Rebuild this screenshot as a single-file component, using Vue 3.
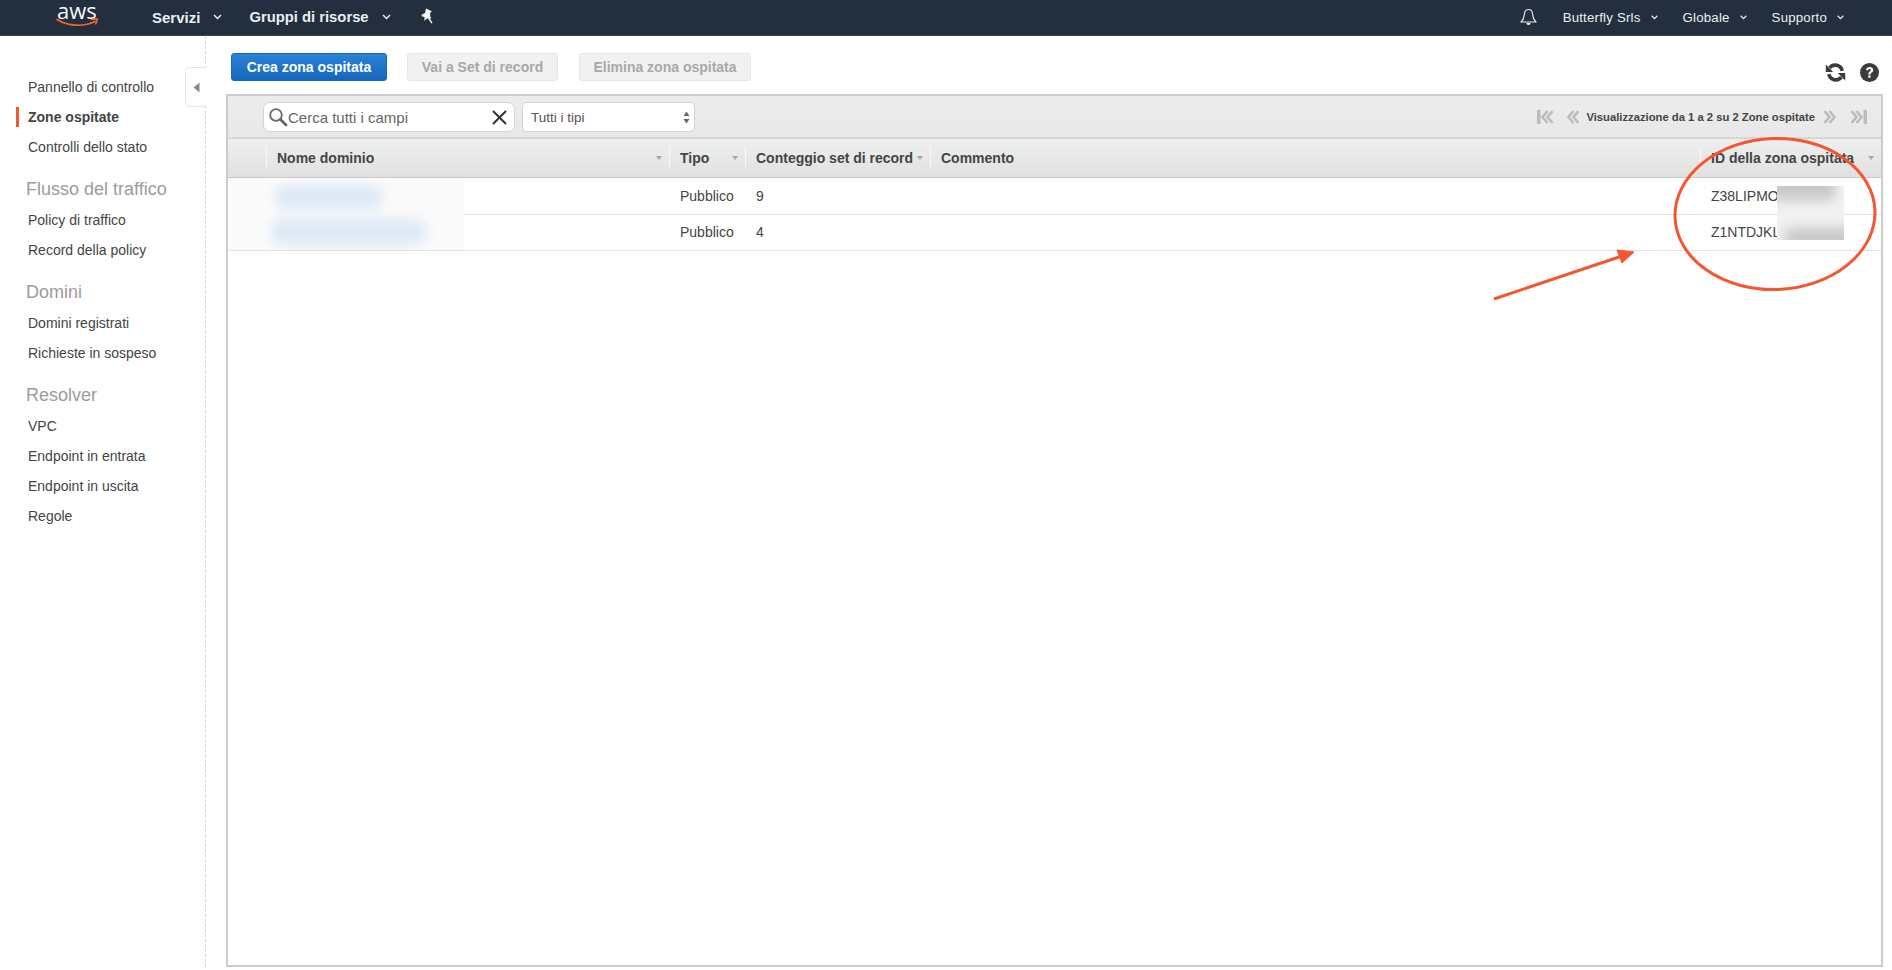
<script setup>
const groups = [
  { items: [{ t: 'Pannello di controllo' }, { t: 'Zone ospitate', active: true }, { t: 'Controlli dello stato' }] },
  { title: 'Flusso del traffico', items: [{ t: 'Policy di traffico' }, { t: 'Record della policy' }] },
  { title: 'Domini', items: [{ t: 'Domini registrati' }, { t: 'Richieste in sospeso' }] },
  { title: 'Resolver', items: [{ t: 'VPC' }, { t: 'Endpoint in entrata' }, { t: 'Endpoint in uscita' }, { t: 'Regole' }] },
]
const columns = [
  { label: '' },
  { label: 'Nome dominio', sort: true },
  { label: 'Tipo', sort: true },
  { label: 'Conteggio set di record', sort: true },
  { label: 'Commento' },
  { label: 'ID della zona ospitata', sort: true },
]
const rows = [
  { type: 'Pubblico', count: '9', id: 'Z38LIPMO' },
  { type: 'Pubblico', count: '4', id: 'Z1NTDJKL' },
]
</script>

<template>
  <div class="page">
    <header class="nav">
      <div class="logo">
        <span class="logo-text">aws</span>
        <svg class="smile" width="44" height="10" viewBox="0 0 44 10">
          <path d="M1 1.500C12 8.500 28 9 39 3.500" fill="none" stroke="#f4662a" stroke-width="1.700" stroke-linecap="round" />
          <path d="M35 1.500L41.500 1 39.500 6.500" fill="none" stroke="#f4662a" stroke-width="1.500" stroke-linejoin="round" />
        </svg>
      </div>
      <span class="nav-strong servizi">Servizi</span>
      <svg class="chev" width="9" height="6" viewBox="0 0 9 6"><path d="M1 1l3.500 3.500L8 1" fill="none" stroke="#e8eaec" stroke-width="1.500" /></svg>
      <span class="nav-strong gruppi">Gruppi di risorse</span>
      <svg class="chev" width="9" height="6" viewBox="0 0 9 6"><path d="M1 1l3.500 3.500L8 1" fill="none" stroke="#e8eaec" stroke-width="1.500" /></svg>
      <svg class="pin" width="14" height="16" viewBox="0 0 14 16">
        <path d="M6 0.500L11.800 3.200 10.200 5 10.200 8.600 11.600 10.200 6.600 10.800 4.300 13 4.600 9.200 1.400 7.900 2 6.400 5 5Z" fill="#f4f5f6" />
        <path d="M8.600 10L12 15.200" stroke="#f4f5f6" stroke-width="1.400" />
      </svg>
      <span class="spacer"></span>
      <svg class="bell" width="17" height="18" viewBox="0 0 17 18">
        <path d="M8.500 1.500C5.600 1.500 4.600 3.800 4.400 6.200 4.200 9.500 3.400 11.600 1.200 14H15.800C13.600 11.600 12.800 9.500 12.600 6.200 12.400 3.800 11.400 1.500 8.500 1.500Z" fill="none" stroke="#e8eaec" stroke-width="1.200" />
        <path d="M6.400 15h4.200c-.3 1.400-1 2-2.100 2s-1.800-.6-2.100-2Z" fill="#e8eaec" />
      </svg>
      <span class="nav-light">Butterfly Srls</span>
      <svg class="caret-nav" width="7" height="5" viewBox="0 0 7 5"><path d="M.7.8l2.800 2.800L6.300.8" fill="none" stroke="#e8eaec" stroke-width="1.300" /></svg>
      <span class="nav-light globale">Globale</span>
      <svg class="caret-nav" width="7" height="5" viewBox="0 0 7 5"><path d="M.7.8l2.800 2.800L6.300.8" fill="none" stroke="#e8eaec" stroke-width="1.300" /></svg>
      <span class="nav-light supporto">Supporto</span>
      <svg class="caret-nav" width="7" height="5" viewBox="0 0 7 5"><path d="M.7.8l2.800 2.800L6.300.8" fill="none" stroke="#e8eaec" stroke-width="1.300" /></svg>
    </header>

    <div class="body">
      <aside class="sidebar">
        <div class="collapse">
          <svg width="7" height="11" viewBox="0 0 7 11"><path d="M6.500 0.500V10.500L0.500 5.500Z" fill="#8a8a8a" /></svg>
        </div>
        <div v-for="(g, i) in groups" :key="i" class="group">
          <div v-if="g.title" class="group-title">{{ g.title }}</div>
          <a v-for="item in g.items" :key="item.t" class="nav-item" :class="{ active: item.active }">{{ item.t }}</a>
        </div>
      </aside>

      <main class="main">
        <div class="actions">
          <button class="btn primary">Crea zona ospitata</button>
          <button class="btn disabled b2">Vai a Set di record</button>
          <button class="btn disabled b3">Elimina zona ospitata</button>
          <span class="spacer"></span>
          <svg class="tool" width="21" height="19" viewBox="0 0 21 19">
            <path d="M17.200 7.800A7.200 7.200 0 0 0 4.600 4.800" fill="none" stroke="#3c3c3c" stroke-width="3.600" />
            <path d="M0.800 1.500V9H8.200Z" fill="#3c3c3c" />
            <path d="M3.800 11.200A7.200 7.200 0 0 0 16.400 14.200" fill="none" stroke="#3c3c3c" stroke-width="3.600" />
            <path d="M20.200 17.500V10H12.800Z" fill="#3c3c3c" />
          </svg>
          <svg class="tool help" width="19" height="19" viewBox="0 0 19 19">
            <circle cx="9.500" cy="9.500" r="9.500" fill="#3c3c3c" />
            <path d="M6 7.200C6.100 5.100 7.500 3.900 9.600 3.900 11.800 3.900 13.200 5.200 13.200 7 13.200 8.400 12.400 9.100 11.500 9.700 10.800 10.200 10.600 10.600 10.600 11.400H8.300C8.300 10 8.800 9.300 9.800 8.500 10.500 8 10.800 7.700 10.800 7.100 10.800 6.400 10.300 6 9.600 6 8.800 6 8.300 6.500 8.200 7.200Z" fill="#fff" />
            <rect x="8.300" y="12.400" width="2.300" height="2.300" fill="#fff" />
          </svg>
        </div>

        <section class="panel">
          <div class="toolbar">
            <div class="search">
              <svg width="20" height="20" viewBox="0 0 20 20">
                <circle cx="8" cy="8" r="5.800" fill="none" stroke="#666" stroke-width="1.800" />
                <path d="M12.300 12.300L18 18" stroke="#666" stroke-width="2.800" stroke-linecap="round" />
              </svg>
              <span class="search-text">Cerca tutti i campi</span>
              <svg class="clear" width="15" height="15" viewBox="0 0 15 15"><path d="M1 1l13 13M14 1L1 14" stroke="#333" stroke-width="2" /></svg>
            </div>
            <div class="select">
              <span>Tutti i tipi</span>
              <svg width="7" height="13" viewBox="0 0 7 13"><path d="M3.500 .5L6.500 5H.5ZM.5 8h6L3.500 12.500Z" fill="#666" /></svg>
            </div>
            <span class="spacer"></span>
            <div class="pager">
              <svg class="p1" width="16" height="14" viewBox="0 0 16 14"><rect x="0" y="0" width="3.500" height="14" fill="#bcbcbc" /><path d="M10.500 1L5.500 7 10.500 13M15.500 1L10.500 7 15.500 13" fill="none" stroke="#bcbcbc" stroke-width="2.600" /></svg>
              <svg class="p2" width="12" height="14" viewBox="0 0 12 14"><path d="M6.500 1L1.500 7 6.500 13M11.500 1L6.500 7 11.500 13" fill="none" stroke="#bcbcbc" stroke-width="2.600" /></svg>
              <span class="pager-text">Visualizzazione da 1 a 2 su 2 Zone ospitate</span>
              <svg class="p3" width="12" height="14" viewBox="0 0 12 14"><path d="M.5 1L5.500 7 .5 13M5.500 1L10.500 7 5.500 13" fill="none" stroke="#bcbcbc" stroke-width="2.600" /></svg>
              <svg class="p4" width="16" height="14" viewBox="0 0 16 14"><path d="M.5 1L5.500 7 .5 13M5.500 1L10.500 7 5.500 13" fill="none" stroke="#bcbcbc" stroke-width="2.600" /><rect x="12.500" y="0" width="3.500" height="14" fill="#bcbcbc" /></svg>
            </div>
          </div>

          <div class="thead grid">
            <div v-for="(c, i) in columns" :key="i" class="th" :class="{ first: i === 0 }">
              <span>{{ c.label }}</span>
              <i v-if="c.sort" class="sort"></i>
            </div>
          </div>

          <div class="tbody">
            <div v-for="r in rows" :key="r.id" class="row grid">
              <div></div>
              <div></div>
              <div class="td">{{ r.type }}</div>
              <div class="td">{{ r.count }}</div>
              <div></div>
              <div class="td">{{ r.id }}</div>
            </div>
            <div class="mask-left">
              <span class="blob blob1"></span>
              <span class="blob blob2"></span>
            </div>
            <div class="mask-id">
              <span class="grey grey1"></span>
              <span class="grey grey2"></span>
            </div>
          </div>
        </section>
      </main>
    </div>

    <svg class="annotation" width="1892" height="970" viewBox="0 0 1892 970">
      <ellipse cx="1775" cy="214" rx="100" ry="75.500" fill="none" stroke="#f4562f" stroke-width="3" transform="rotate(-2 1775 214)" />
      <path d="M1494 299L1622 256" stroke="#f4562f" stroke-width="3" />
      <path d="M1634 252L1617 250 1622 263Z" fill="#f4562f" stroke="#f4562f" />
    </svg>
  </div>
</template>

<style>
html, body { margin: 0; background: #fff; }
</style>

<style scoped>
.page {
  position: relative;
  width: 1892px;
  height: 970px;
  overflow: hidden;
  display: flex;
  flex-direction: column;
  font-family: "Liberation Sans", Arial, sans-serif;
  color: #444;
  background: #fff;
}
.spacer { flex: 1; }

/* top nav */
.nav {
  flex: 0 0 36px;
  box-sizing: border-box;
  height: 36px;
  padding-bottom: 1px;
  background: #232f3e;
  display: flex;
  align-items: center;
  color: #eceef0;
  border-bottom: 1px solid #3a4553;
}
.logo {
  position: relative;
  width: 44px;
  height: 35px;
  margin-left: 55px;
}
.logo-text {
  display: block;
  font-family: "Open Sans", sans-serif;
  font-size: 22px;
  line-height: 20px;
  padding-left: 2px;
  color: #f6f7f8;
}
.smile { position: absolute; left: 1px; top: 18px; }
.nav-strong { font-size: 15px; font-weight: 700; }
.gruppi { font-size: 14.800px; margin-left: 27px; }
.servizi { margin-left: 53px; }
.chev { margin-left: 13px; }
.pin { margin-left: 29px; margin-top: -3px; }
.bell { margin-right: 26px; }
.nav-light { font-size: 13.250px; letter-spacing: 0.200px; }
.caret-nav { margin-left: 10px; }
.globale { margin-left: 25px; }
.supporto { margin-left: 25px; }
.nav > .caret-nav:last-child { margin-right: 48px; }

/* sidebar */
.body { flex: 1; display: flex; min-height: 0; }
.sidebar {
  position: relative;
  box-sizing: border-box;
  flex: 0 0 206px;
  height: 931px;
  border-right: 1px dashed #d5d5d5;
  padding-top: 36px;
}
.collapse {
  position: absolute;
  right: -1px;
  top: 31px;
  box-sizing: border-box;
  width: 21px;
  height: 40px;
  background: #fff;
  border: 1px solid #e4e4e4;
  border-right: 0;
  border-radius: 5px 0 0 5px;
  display: flex;
  align-items: center;
  padding-left: 7px;
}
.group { margin-bottom: 17px; }
.group-title {
  font-size: 18px;
  line-height: 20px;
  color: #9b9b9b;
  padding-left: 26px;
  margin-bottom: 6px;
}
.nav-item {
  display: block;
  height: 30px;
  line-height: 30px;
  font-size: 14px;
  padding-left: 28px;
  color: #444;
  position: relative;
}
.nav-item.active { font-weight: 700; }
.nav-item.active::before {
  content: "";
  position: absolute;
  left: 16px;
  top: 5px;
  width: 3px;
  height: 20px;
  background: #f4562f;
}

/* main */
.main {
  flex: 1;
  min-width: 0;
  display: flex;
  flex-direction: column;
  padding: 0 9px 3px 20px;
}
.actions {
  flex: 0 0 58px;
  box-sizing: border-box;
  display: flex;
  align-items: flex-start;
  padding: 17px 4px 0 5px;
}
.btn {
  box-sizing: border-box;
  height: 28px;
  border-radius: 3px;
  font-family: inherit;
  font-size: 14px;
  font-weight: 700;
  padding: 0;
}
.primary {
  width: 156px;
  color: #fff;
  border: 1px solid #1467bb;
  background: linear-gradient(#2a83d8, #1466bc);
}
.disabled {
  color: #a8a8a8;
  border: 1px solid #e6e6e6;
  background: #f1f1f1;
}
.b2 { width: 151px; margin-left: 20px; }
.b3 { width: 172px; margin-left: 21px; }
.tool { margin-top: 10px; }
.help { margin-left: 14px; }

.panel {
  flex: 1;
  box-sizing: border-box;
  border: 2px solid #ccc;
  display: flex;
  flex-direction: column;
  min-height: 0;
}
.toolbar {
  flex: 0 0 42px;
  box-sizing: border-box;
  display: flex;
  align-items: center;
  padding: 1px 14px 0 35px;
  background: linear-gradient(#ececec, #e8e8e8);
  border-bottom: 1px dotted #c4c4c4;
}
.search {
  box-sizing: border-box;
  width: 252px;
  height: 30px;
  background: #fff;
  border: 1px solid #d4d4d4;
  border-radius: 7px;
  display: flex;
  align-items: center;
  padding: 0 4px;
}
.search-text { font-size: 15px; color: #666; }
.clear { margin-left: auto; margin-right: 3px; }
.select {
  box-sizing: border-box;
  width: 173px;
  height: 30px;
  margin-left: 7px;
  background: #fff;
  border: 1px solid #d4d4d4;
  border-radius: 5px;
  display: flex;
  align-items: center;
  justify-content: space-between;
  padding: 0 4px 0 8px;
  font-size: 13.500px;
  color: #555;
}
.pager { display: flex; align-items: center; }
.p2 { margin-left: 14px; }
.pager-text { font-size: 11.250px; font-weight: 700; color: #444; margin-left: 7px; }
.p3 { margin-left: 9px; }
.p4 { margin-left: 15px; }

.grid {
  display: grid;
  grid-template-columns: 38px 403px 76px 185px 770px 1fr;
}
.thead {
  flex: 0 0 40px;
  box-sizing: border-box;
  background: linear-gradient(#eeefef, #e1e1e1);
  border-top: 1px solid #d4d4d4;
  border-bottom: 1px solid #c8c8c8;
  align-items: center;
}
.th {
  position: relative;
  box-sizing: border-box;
  height: 22px;
  line-height: 22px;
  border-left: 1px solid #f8f8f8;
  padding-left: 10px;
  font-size: 14px;
  font-weight: 700;
  color: #444;
  white-space: nowrap;
}
.th.first { border-left: 0; }
.sort {
  position: absolute;
  right: 7px;
  top: 9px;
  width: 0;
  height: 0;
  border-left: 3.500px solid transparent;
  border-right: 3.500px solid transparent;
  border-top: 4px solid #a8a8a8;
}

.tbody { position: relative; flex: 1; padding-top: 1px; }
.row { height: 36px; border-bottom: 1px solid #e2e2e2; box-sizing: border-box; }
.td {
  font-size: 14px;
  line-height: 35px;
  color: #444;
  padding-left: 11px;
}
.mask-left {
  position: absolute;
  left: 0;
  top: 0;
  width: 236px;
  height: 72px;
  overflow: hidden;
  background-color: #fff;
  background-image: conic-gradient(#f6f6f6 25%, #fff 0 50%, #f6f6f6 0 75%, #fff 0);
  background-size: 2px 2px;
}
.blob {
  position: absolute;
  background: #dde9f5;
  border-radius: 10px;
  filter: blur(6px);
}
.blob1 { left: 47px; top: 7px; width: 108px; height: 24px; }
.blob2 { left: 43px; top: 41px; width: 155px; height: 26px; }
.mask-id {
  position: absolute;
  left: 1549px;
  top: 8px;
  width: 67px;
  height: 54px;
  overflow: hidden;
  background: #f1f1f1;
}
.grey {
  position: absolute;
  background: #c8c8c8;
  filter: blur(6px);
}
.grey1 { left: -8px; top: -10px; width: 66px; height: 24px; }
.grey2 { left: 8px; top: 42px; width: 80px; height: 20px; }

.annotation {
  position: absolute;
  left: 0;
  top: 0;
  pointer-events: none;
}
</style>
